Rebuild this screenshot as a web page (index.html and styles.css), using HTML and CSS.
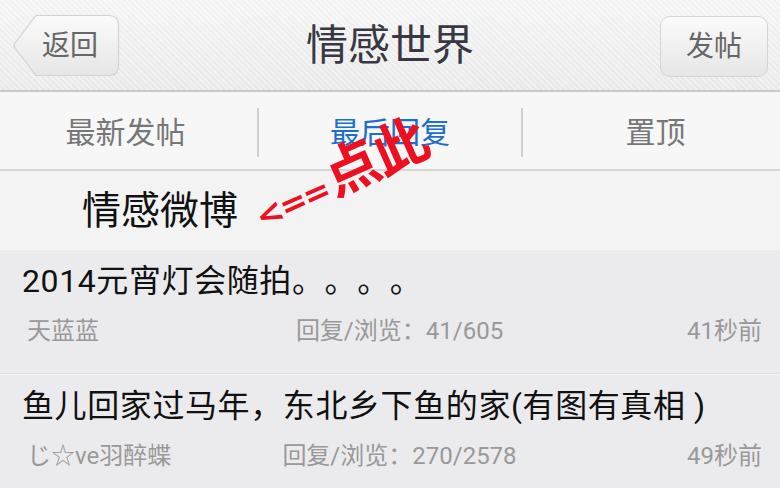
FILE: index.html
```html
<!DOCTYPE html>
<html lang="zh-CN">
<head>
<meta charset="utf-8">
<title>情感世界</title>
<link rel="stylesheet" href="styles.css">
</head>
<body>
<div class="app">
  <header class="topbar">
    <button class="btn btn-back">
      <svg class="btn-shape" width="108" height="63" viewBox="0 0 108 63">
        <defs>
          <linearGradient id="bg" x1="0" y1="0" x2="0" y2="1">
            <stop offset="0" stop-color="#fbfbfb"/>
            <stop offset="1" stop-color="#e6e6e6"/>
          </linearGradient>
        </defs>
        <path d="M24 1.5 L97 1.5 Q106.5 1.5 106.5 11 L106.5 52 Q106.5 61.5 97 61.5 L24 61.5 L3 34 Q1 31.5 3 29 Z" fill="url(#bg)" stroke="#d2d2d2" stroke-width="1.2"/>
      </svg>
      <span class="btn-label">返回</span>
    </button>
    <h1 class="title">情感世界</h1>
    <button class="btn btn-post"><span class="btn-label">发帖</span></button>
  </header>

  <nav class="tabs">
    <div class="tab">最新发帖</div>
    <div class="tab active">最后回复</div>
    <div class="tab">置顶</div>
  </nav>

  <section class="forum">
    <div class="forum-name">情感微博</div>
    <div class="note"><span class="arrow">&lt;==</span><span class="big">点此</span></div>
  </section>

  <ul class="posts">
    <li class="post">
      <div class="post-title">2014元宵灯会随拍。。。。</div>
      <div class="post-meta">
        <span class="author">天蓝蓝</span>
        <span class="stats">回复/浏览：41/605</span>
        <span class="time">41秒前</span>
      </div>
    </li>
    <li class="post">
      <div class="post-title">鱼儿回家过马年，东北乡下鱼的家(有图有真相 )</div>
      <div class="post-meta">
        <span class="author">じ☆ve羽醉蝶</span>
        <span class="stats">回复/浏览：270/2578</span>
        <span class="time">49秒前</span>
      </div>
    </li>
  </ul>
</div>
</body>
</html>
```

FILE: styles.css
```css
* { box-sizing: border-box; }
html, body { margin: 0; padding: 0; }
body {
  width: 780px;
  height: 488px;
  overflow: hidden;
  font-family: Roboto, "Noto Sans CJK SC", "Noto Sans", sans-serif;
  background: #ebebed;
  text-spacing-trim: space-all;
}
.app { display: flex; flex-direction: column; }

.topbar {
  height: 92px;
  display: flex;
  align-items: center;
  justify-content: space-between;
  padding: 0 12px 0 12px;
  background:
    repeating-linear-gradient(45deg, rgba(255,255,255,0.25) 0 2px, rgba(0,0,0,0.012) 2px 4px),
    linear-gradient(#f6f6f6, #ebebeb);
  border-bottom: 2px solid #c9c9c9;
  position: relative;
}
.btn {
  position: relative;
  border: none;
  padding: 0;
  font-family: inherit;
  color: #666;
  font-size: 28px;
  cursor: pointer;
  display: flex;
  align-items: center;
  justify-content: center;
}
.btn-back {
  width: 108px;
  height: 63px;
  background: transparent;
  margin-top: 1px;
  padding-left: 8px;
}
.btn-shape { position: absolute; left: 0; top: 0; }
.btn-label { position: relative; line-height: 1; }
.btn-post {
  width: 108px;
  height: 61px;
  margin-top: 3px;
  border: 1.2px solid #d4d4d4;
  border-radius: 10px;
  background: linear-gradient(#fbfbfb, #e6e6e6);
}
.title {
  position: absolute;
  left: 0; right: 0; top: 0;
  height: 82px;
  margin: 0;
  display: flex;
  align-items: center;
  justify-content: center;
  font-size: 42px;
  font-weight: normal;
  color: #383844;
  pointer-events: none;
}

.tabs {
  height: 79px;
  padding-top: 3px;
  display: grid;
  grid-template-columns: 257px 264px 1fr;
  background: #f7f7f7;
  border-bottom: 2px solid #d6d6d6;
  align-items: center;
}
.tab {
  font-size: 30px;
  color: #777;
  text-align: center;
  height: 49px;
  line-height: 49px;
}
.tab + .tab { border-left: 2px solid #cfcfcf; }
.tab:first-child { text-indent: -6px; }
.tab:last-child { text-indent: 8px; }
.tab.active { color: #1d6fcc; }

.forum {
  height: 78px;
  background: #f3f3f3;
  display: flex;
  align-items: center;
  padding-left: 82px;
  position: relative;
}
.forum-name {
  font-size: 39px;
  color: #111;
  line-height: 1;
  margin-top: 2px;
}
.note {
  position: absolute;
  left: 254px;
  top: 14px;
  height: 54px;
  color: #ec1020;
  font-weight: bold;
  transform: rotate(-24deg);
  transform-origin: 0 50%;
  white-space: nowrap;
  line-height: 54px;
}
.note .arrow { font-size: 33px; font-family: "DejaVu Sans", sans-serif; letter-spacing: -2px; }
.note .big { font-size: 55px; margin-left: 3px; letter-spacing: -2px; }

.posts { list-style: none; margin: 0; padding: 0; }
.post {
  background: #ebebed;
  padding: 14px 18px 0 22px;
  height: 125px;
  border-bottom: 1px solid #dcdcde;
  box-shadow: inset 0 1px 0 #f7f7f8;
}
.post-title {
  font-size: 32px;
  color: #111;
  line-height: 36px;
  white-space: nowrap;
  letter-spacing: 0.6px;
}
.post-meta {
  margin-top: 17px;
  display: grid;
  grid-template-columns: 1fr auto 1fr;
  font-size: 24px;
  line-height: 30px;
  color: #999;
  padding-left: 5px;
}
.stats { text-align: center; padding-left: 10px; }
.time { text-align: right; }
```
